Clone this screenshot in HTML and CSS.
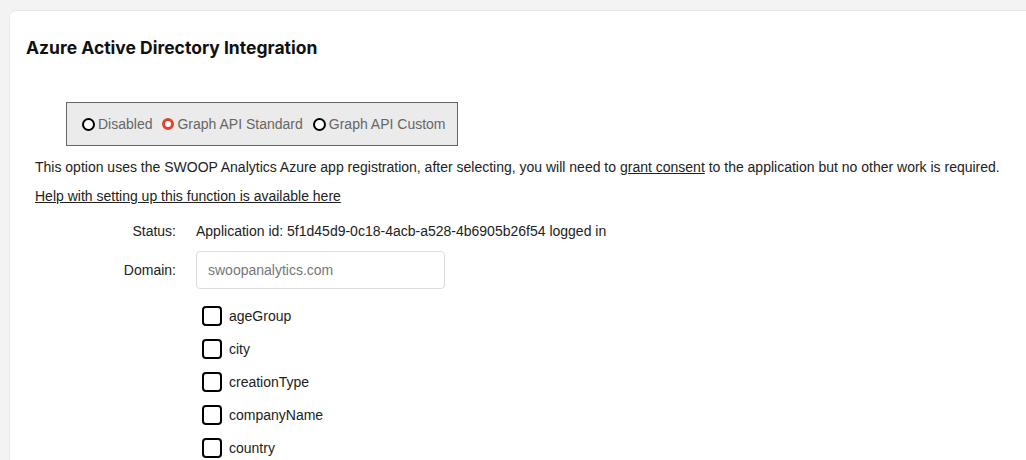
FILE: index.html
```html
<!DOCTYPE html>
<html>
<head>
<meta charset="utf-8">
<link rel="stylesheet" href="styles.css">
</head>
<body>
<div class="card">
  <h2 class="title">Azure Active Directory Integration</h2>
  <div class="modes">
    <label class="mode"><span class="radio"></span>Disabled</label>
    <label class="mode"><span class="radio on"></span>Graph API Standard</label>
    <label class="mode"><span class="radio"></span>Graph API Custom</label>
  </div>
  <p class="desc">This option uses the SWOOP Analytics Azure app registration, after selecting, you will need to <a href="#">grant consent</a> to the application but no other work is required.</p>
  <p class="help"><a href="#">Help with setting up this function is available here</a></p>
  <div class="form">
    <div class="lbl">Status:</div>
    <div class="val">Application id: 5f1d45d9-0c18-4acb-a528-4b6905b26f54 logged in</div>
    <div class="lbl">Domain:</div>
    <div class="val"><div class="input">swoopanalytics.com</div></div>
  </div>
  <div class="checks">
    <div class="check"><span class="box"></span>ageGroup</div>
    <div class="check"><span class="box"></span>city</div>
    <div class="check"><span class="box"></span>creationType</div>
    <div class="check"><span class="box"></span>companyName</div>
    <div class="check"><span class="box"></span>country</div>
  </div>
</div>
</body>
</html>
```
FILE: styles.css
```css
html, body { margin: 0; padding: 0; }
body {
  background: #f3f3f3;
  font-family: "Liberation Sans", Arial, sans-serif;
  font-size: 14px;
  color: #222;
  height: 460px;
  overflow: hidden;
}
.card {
  margin: 10px 0 0 9px;
  background: #fff;
  border-radius: 7px 0 0 0;
  border-top: 1px solid #e8e8e8;
  border-left: 1px solid #ececec;
  padding: 26px 0 0 16px;
  min-height: 500px;
}
.title {
  margin: 0;
  font-family: Inter, "Noto Sans", sans-serif;
  font-weight: 700;
  font-size: 17.5px;
  color: #111;
  letter-spacing: 0;
  line-height: 22px;
}
.modes {
  margin: 43px 0 0 40px;
  background: #ebebeb;
  border: 1px solid #666;
  display: flex;
  align-items: center;
  padding-left: 15px;
  box-sizing: border-box;
  width: 392px;
  height: 44px;
  gap: 10px;
}
.mode {
  display: flex;
  align-items: center;
  color: #666;
  font-size: 14px;
}
.radio {
  width: 9px;
  height: 9px;
  border: 2px solid #000;
  border-radius: 50%;
  margin-right: 3px;
  background: #fff;
}
.radio.on {
  border: 3.5px solid #e0452c;
  width: 6px;
  height: 6px;
}
.desc {
  margin: 12px 0 0 9px;
  line-height: 18px;
}
a { color: #222; }
.help {
  margin: 11px 0 0 9px;
  line-height: 18px;
}
.form {
  margin-top: 18px;
  display: grid;
  grid-template-columns: 150px auto;
  column-gap: 20px;
  row-gap: 12px;
  align-items: center;
}
.lbl { text-align: right; }
.input {
  width: 249px;
  height: 38px;
  box-sizing: border-box;
  border: 1px solid #ddd;
  border-radius: 4px;
  padding-left: 11px;
  line-height: 36px;
  color: #777;
}
.checks {
  margin: 10px 0 0 176px;
}
.check {
  display: flex;
  align-items: center;
  height: 33px;
}
.box {
  width: 16px;
  height: 16px;
  border: 2px solid #000;
  border-radius: 4px;
  margin-right: 7px;
}
```
